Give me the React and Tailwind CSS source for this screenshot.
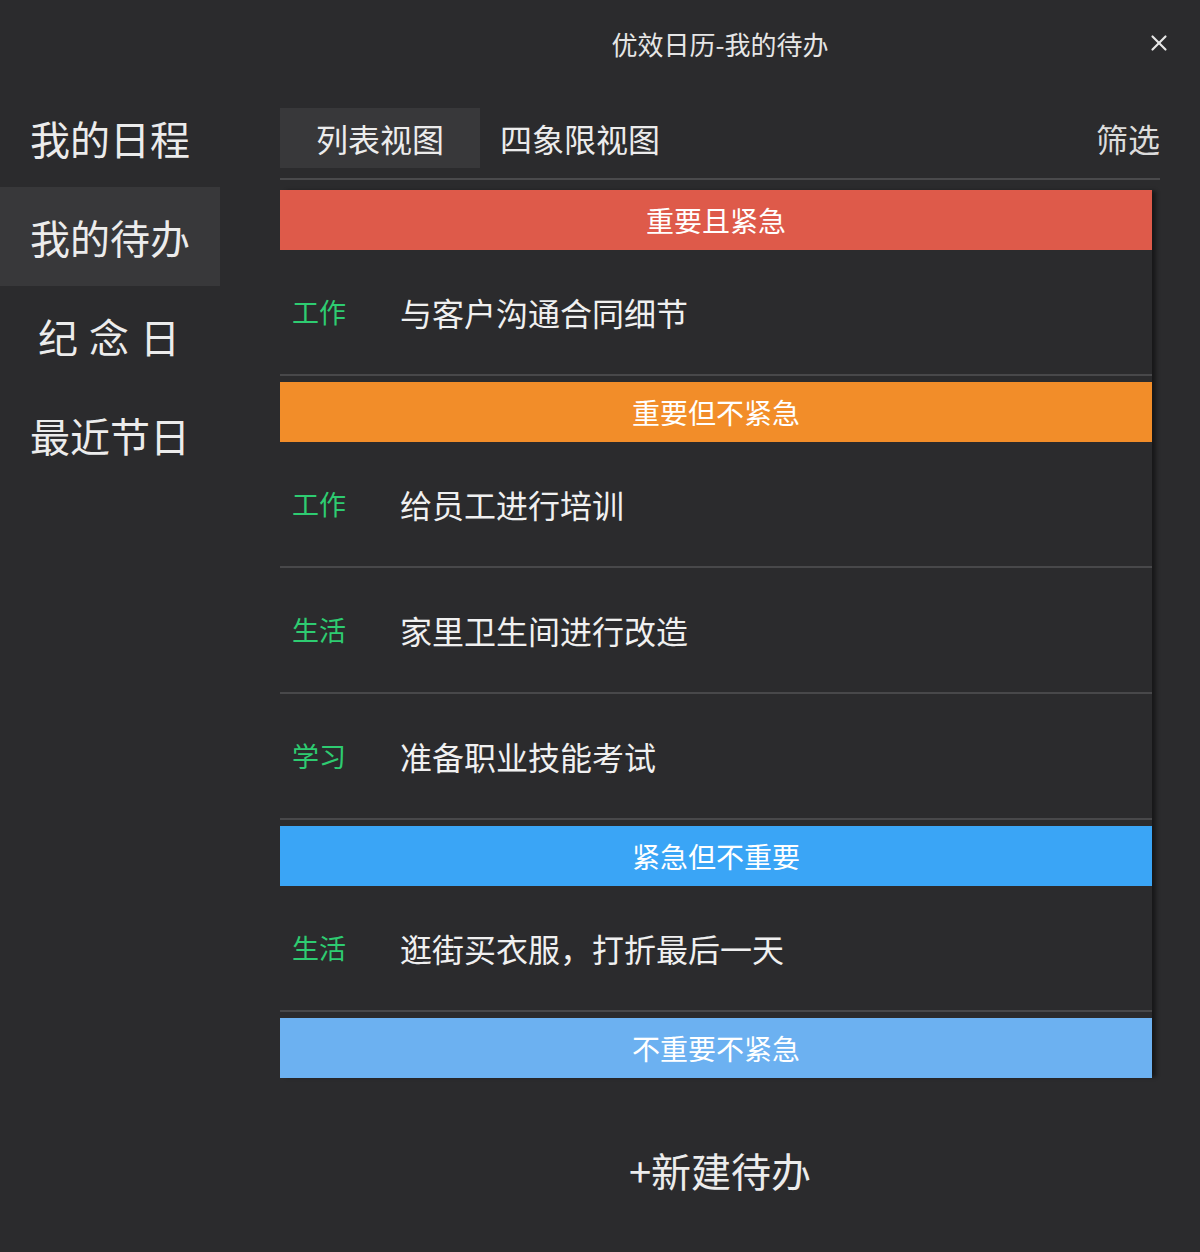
import { X } from "lucide-react";

const groups = [
  {
    title: "重要且紧急",
    color: "bg-[#de5a4a]",
    items: [{ tag: "工作", text: "与客户沟通合同细节" }],
  },
  {
    title: "重要但不紧急",
    color: "bg-[#f28d29]",
    items: [
      { tag: "工作", text: "给员工进行培训" },
      { tag: "生活", text: "家里卫生间进行改造" },
      { tag: "学习", text: "准备职业技能考试" },
    ],
  },
  {
    title: "紧急但不重要",
    color: "bg-[#3aa5f6]",
    items: [{ tag: "生活", text: "逛街买衣服，打折最后一天" }],
  },
  {
    title: "不重要不紧急",
    color: "bg-[#6cb1f1]",
    items: [],
  },
];

const menu = ["我的日程", "我的待办", "纪念日", "最近节日"];

export default function App() {
  return (
    <div className="w-[1200px] h-[1252px] bg-[#2b2b2d] text-[#ececec] font-['Noto_Sans_CJK_SC',sans-serif] relative overflow-hidden">
      <div className="h-[88px] pl-[280px] pr-[40px] flex items-center justify-center">
        <span className="text-[26px] text-[#e6e6e6] -mt-[2px]">优效日历-我的待办</span>
      </div>
      <button className="absolute right-[28px] top-[30px] text-[#e6e6e6]">
        <X size={26} strokeWidth={2} />
      </button>

      <div className="flex">
        <aside className="w-[220px] flex flex-col">
          {menu.map((m, i) => (
            <div
              key={m}
              className={
                "h-[99px] flex items-center pl-[30px] text-[40px] " +
                (i === 1 ? "bg-[#38383a]" : "") +
                (m === "纪念日" ? " tracking-[11px] pl-[38px]" : "")
              }
            >
              {m}
            </div>
          ))}
        </aside>

        <main className="ml-[60px] w-[880px] pt-[20px]">
          <div className="h-[60px] flex items-center">
            <div className="w-[200px] h-full bg-[#38383a] flex items-center justify-center text-[32px]">
              列表视图
            </div>
            <div className="ml-[20px] text-[32px]">四象限视图</div>
            <div className="ml-auto text-[32px] text-[#dcdcdc]">筛选</div>
          </div>
          <div className="mt-[10px] h-[2px] bg-[#4a4a4c]" />

          <div className="mt-[10px] w-[872px] flex flex-col gap-[6px] shadow-[5px_0_4px_-1px_rgba(0,0,0,0.45)]">
            {groups.map((g) => (
              <section key={g.title}>
                <div
                  className={
                    g.color +
                    " h-[60px] flex items-center justify-center text-[28px] text-white"
                  }
                >
                  {g.title}
                </div>
                {g.items.map((it) => (
                  <div
                    key={it.text}
                    className="h-[126px] border-b-2 border-[#48484a] flex items-center"
                  >
                    <span className="w-[120px] pl-[12px] text-[27px] text-[#2ecc71]">
                      {it.tag}
                    </span>
                    <span className="text-[32px] text-[#f0f0f0]">{it.text}</span>
                  </div>
                ))}
              </section>
            ))}
          </div>

          <div className="mt-[62px] text-center text-[40px] text-[#ececec]">+新建待办</div>
        </main>
      </div>
    </div>
  );
}
